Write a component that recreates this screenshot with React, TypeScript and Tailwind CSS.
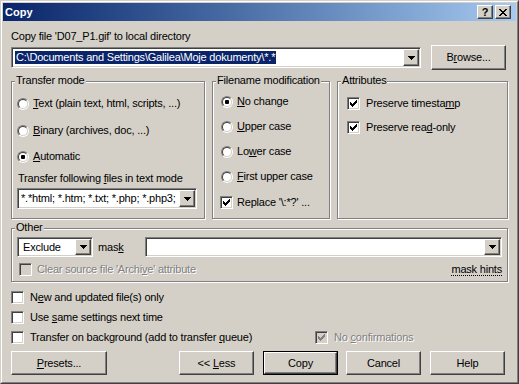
import React from "react";

const raised =
  "border border-t-white border-l-white border-r-[#404040] border-b-[#404040] shadow-[inset_-1px_-1px_0_#808080]";
const sunken =
  "border border-t-[#808080] border-l-[#808080] border-r-white border-b-white shadow-[inset_1px_1px_0_#404040,inset_-1px_-1px_0_#d4d0c8]";

function Arrow() {
  return (
    <svg width="7" height="4" viewBox="0 0 7 4" shapeRendering="crispEdges">
      <path d="M0 0h7v1H0zM1 1h5v1H1zM2 2h3v1H2zM3 3h1v1H3z" fill="#000" />
    </svg>
  );
}

function DropBtn() {
  return (
    <div className={`w-[16px] h-full shrink-0 flex items-center justify-center bg-[#d4d0c8] ${raised}`}>
      <Arrow />
    </div>
  );
}

function Combo({ className, children }: { className: string; children?: React.ReactNode }) {
  return (
    <div className={`${sunken} bg-white p-[1px] flex shrink-0 ${className}`}>
      <div className="flex-1 flex items-center pl-[2px] overflow-hidden whitespace-nowrap">{children}</div>
      <DropBtn />
    </div>
  );
}

function Radio({ checked, children }: { checked?: boolean; children: React.ReactNode }) {
  return (
    <div className="flex items-center h-[13px]">
      <div className="w-[12px] h-[12px] shrink-0 rounded-full border border-t-[#808080] border-l-[#808080] border-r-white border-b-white">
        <div className="w-full h-full rounded-full border border-t-[#404040] border-l-[#404040] border-r-[#d4d0c8] border-b-[#d4d0c8] bg-white flex items-center justify-center">
          {checked && <div className="w-[4px] h-[4px] bg-black rounded-[1px]" />}
        </div>
      </div>
      <span className="ml-[4px] whitespace-nowrap">{children}</span>
    </div>
  );
}

function CheckBox({ checked, disabled }: { checked?: boolean; disabled?: boolean }) {
  return (
    <div className={`relative w-[13px] h-[13px] shrink-0 ${sunken} ${disabled ? "bg-[#d4d0c8]" : "bg-white"}`}>
      {checked && (
        <svg className="absolute left-[2px] top-[2px]" width="7" height="7" viewBox="0 0 7 7" shapeRendering="crispEdges">
          <path
            d="M0 2h1v3H0zM1 3h1v3H1zM2 4h1v3H2zM3 3h1v3H3zM4 2h1v3H4zM5 1h1v3H5zM6 0h1v3H6z"
            fill={disabled ? "#808080" : "#000"}
          />
        </svg>
      )}
    </div>
  );
}

function Check({
  checked,
  disabled,
  gap = "ml-[5px]",
  children,
}: {
  checked?: boolean;
  disabled?: boolean;
  gap?: string;
  children: React.ReactNode;
}) {
  return (
    <div className="flex items-center h-[13px]">
      <CheckBox checked={checked} disabled={disabled} />
      <span
        className={`${gap} whitespace-nowrap ${disabled ? "text-[#808080] [text-shadow:1px_1px_0_#fff]" : ""}`}
      >
        {children}
      </span>
    </div>
  );
}

function Group({ title, className, children }: { title: string; className: string; children?: React.ReactNode }) {
  return (
    <div className={`relative shrink-0 border border-[#808080] shadow-[inset_1px_1px_0_#fff,1px_1px_0_#fff] ${className}`}>
      <span className="absolute -top-[8px] left-[3px] px-[1px] bg-[#d4d0c8] leading-[13px] whitespace-nowrap">
        {title}
      </span>
      {children}
    </div>
  );
}

function Btn({ className, children }: { className: string; children: React.ReactNode }) {
  return (
    <div className={`h-[24px] shrink-0 flex items-center justify-center bg-[#d4d0c8] ${raised} ${className}`}>
      {children}
    </div>
  );
}

function TBtn({ children }: { children: React.ReactNode }) {
  return (
    <div className={`w-[16px] h-[14px] flex items-center justify-center bg-[#d4d0c8] ${raised}`}>{children}</div>
  );
}

export default function App() {
  return (
    <div className="w-[519px] h-[384px] font-['Liberation_Sans',Arial,sans-serif] text-[11px] leading-[13px] text-black tracking-[-0.2px] select-none">
      <div className="w-full h-full border border-t-[#d4d0c8] border-l-[#d4d0c8] border-r-[#404040] border-b-[#404040]">
        <div className="w-full h-full border border-t-white border-l-white border-r-[#808080] border-b-[#808080] bg-[#d4d0c8] p-[1px] flex flex-col">
          {/* title bar */}
          <div className="h-[18px] shrink-0 bg-linear-to-r from-[#0a246a] to-[#a6caf0] flex items-center pl-[2px] pr-[5px]">
            <span className="text-white font-bold text-[11px] tracking-normal">Copy</span>
            <div className="ml-auto flex gap-[2px]">
              <TBtn>
                <span className="font-bold text-[11px] leading-[11px] tracking-normal">?</span>
              </TBtn>
              <TBtn>
                <svg width="8" height="7" viewBox="0 0 8 7" shapeRendering="crispEdges">
                  <path
                    d="M0 0h2v1H0zM6 0h2v1H6zM1 1h2v1H1zM5 1h2v1H5zM2 2h4v1H2zM3 3h2v1H3zM2 4h4v1H2zM1 5h2v1H1zM5 5h2v1H5zM0 6h2v1H0zM6 6h2v1H6z"
                    fill="#000"
                  />
                </svg>
              </TBtn>
            </div>
          </div>

          {/* client */}
          <div className="flex flex-col px-[8px]">
            <div className="mt-[9px] h-[13px] whitespace-nowrap">Copy file 'D07_P1.gif' to local directory</div>

            <div className="mt-[2px] h-[25px] flex items-center">
              <Combo className="w-[410px] h-[21px]">
                <span className="bg-[#0a246a] text-white px-[1px] leading-[13px]">
                  {"C:\\Documents and Settings\\Galilea\\Moje dokumenty\\*.*"}
                </span>
              </Combo>
              <div className={`ml-[10px] w-[75px] h-[25px] flex items-center justify-center bg-[#d4d0c8] ${raised}`}>
                <span>
                  B<u>r</u>owse...
                </span>
              </div>
            </div>

            {/* groups */}
            <div className="mt-[11px] h-[138px] flex gap-[7px]">
              <Group title="Transfer mode" className="w-[194px] h-[138px] pl-[5px] pt-[15px] flex flex-col">
                <Radio>
                  <u>T</u>ext (plain text, html, scripts, ...)
                </Radio>
                <div className="mt-[14px]">
                  <Radio>
                    <u>B</u>inary (archives, doc, ...)
                  </Radio>
                </div>
                <div className="mt-[13px]">
                  <Radio checked>
                    <u>A</u>utomatic
                  </Radio>
                </div>
                <div className="mt-[9px] ml-[1px] h-[13px] whitespace-nowrap">
                  Transfer following <u>f</u>iles in text mode
                </div>
                <div className="mt-[3px]">
                  <Combo className="w-[180px] h-[21px]">
                    <span>*.*html; *.htm; *.txt; *.php; *.php3;</span>
                  </Combo>
                </div>
              </Group>

              <Group title="Filename modification" className="w-[118px] h-[138px] pl-[8px] pt-[13px] flex flex-col">
                <Radio checked>
                  <u>N</u>o change
                </Radio>
                <div className="mt-[12px]">
                  <Radio>
                    <u>U</u>pper case
                  </Radio>
                </div>
                <div className="mt-[12px]">
                  <Radio>
                    Lo<u>w</u>er case
                  </Radio>
                </div>
                <div className="mt-[12px]">
                  <Radio>
                    <u>F</u>irst upper case
                  </Radio>
                </div>
                <div className="mt-[13px] -ml-[1px]">
                  <Check checked gap="ml-[4px]">
                    Replace '\:*?' ...
                  </Check>
                </div>
              </Group>

              <Group title="Attributes" className="w-[171px] h-[138px] pl-[9px] pt-[15px] flex flex-col">
                <Check checked gap="ml-[6px]">
                  Preserve timesta<u>m</u>p
                </Check>
                <div className="mt-[11px]">
                  <Check checked gap="ml-[6px]">
                    Preserve rea<u>d</u>-only
                  </Check>
                </div>
              </Group>
            </div>

            {/* other */}
            <div className="mt-[9px]">
              <Group title="Other" className="w-[497px] h-[54px] pl-[5px] pr-[5px] pt-[8px] flex flex-col">
                <div className="flex items-center h-[20px]">
                  <Combo className="w-[76px] h-[20px]">
                    <span className="ml-[2px]">Exclude</span>
                  </Combo>
                  <span className="ml-[5px]">
                    mas<u>k</u>
                  </span>
                  <Combo className="ml-auto w-[357px] h-[20px]" />
                </div>
                <div className="mt-[6px] flex items-center h-[13px]">
                  <div className="ml-[2px]">
                    <Check disabled gap="ml-[5px]">
                      Clear source file 'Archi<u>v</u>e' attribute
                    </Check>
                  </div>
                  <span className="ml-auto underline decoration-dotted underline-offset-2">mask hints</span>
                </div>
              </Group>
            </div>

            {/* bottom checkboxes */}
            <div className="mt-[9px] flex flex-col gap-[7px]">
              <Check gap="ml-[6px]">
                N<u>e</u>w and updated file(s) only
              </Check>
              <Check gap="ml-[6px]">
                Use <u>s</u>ame settings next time
              </Check>
              <div className="flex items-center h-[13px]">
                <div className="w-[304px] shrink-0">
                  <Check gap="ml-[6px]">
                    Transfer on background (add to transfer <u>q</u>ueue)
                  </Check>
                </div>
                <Check checked disabled gap="ml-[6px]">
                  No <u>c</u>onfirmations
                </Check>
              </div>
            </div>

            {/* buttons */}
            <div className="mt-[7px] h-[24px] flex">
              <Btn className="w-[96px]">
                <span>
                  <u>P</u>resets...
                </span>
              </Btn>
              <Btn className="ml-[72px] w-[75px]">
                <span>
                  {"<< "}
                  <u>L</u>ess
                </span>
              </Btn>
              <div className="ml-[9px] w-[75px] h-[24px] border border-black">
                <div className={`w-full h-full flex items-center justify-center bg-[#d4d0c8] ${raised}`}>Copy</div>
              </div>
              <Btn className="ml-[8px] w-[75px]">Cancel</Btn>
              <Btn className="ml-[9px] w-[75px]">Help</Btn>
            </div>
          </div>
        </div>
      </div>
    </div>
  );
}
